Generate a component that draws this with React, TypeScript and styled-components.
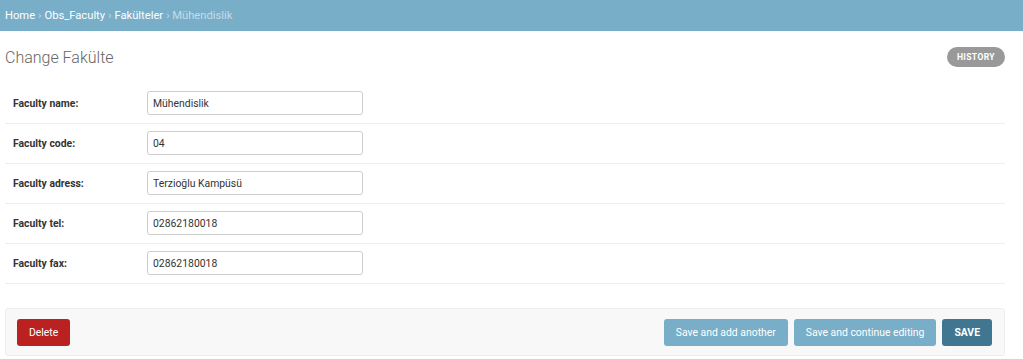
import React from 'react'
import styled, { createGlobalStyle } from 'styled-components'

const GlobalStyle = createGlobalStyle`
  html, body {
    margin: 0;
    padding: 0;
    background: #fff;
    font-family: Roboto, "Liberation Sans", sans-serif;
    color: #333;
  }
`

const Breadcrumbs = styled.div`
  height: 31px;
  background: #79aec8;
  color: #c4dce8;
  font-size: 11.2px;
  display: flex;
  align-items: center;
  padding: 0 5px;
  box-sizing: border-box;
  gap: 3px;
`

const Crumb = styled.a`
  color: #fff;
  text-decoration: none;
`

const Content = styled.div`
  padding: 14px 18px 0 5px;
`

const TitleRow = styled.div`
  display: flex;
  justify-content: space-between;
  align-items: center;
  margin-bottom: 13px;
`

const Title = styled.h1`
  margin: 0;
  font-size: 16px;
  font-weight: 300;
  color: #666;
  line-height: 26px;
`

const HistoryLink = styled.a`
  background: #999;
  color: #fff;
  font-size: 8.5px;
  font-weight: 700;
  letter-spacing: 0.4px;
  text-transform: uppercase;
  border-radius: 10px;
  height: 20px;
  padding: 0 10px;
  display: flex;
  align-items: center;
  margin-top: -2px;
`

const FormRow = styled.div`
  display: flex;
  align-items: center;
  height: 40px;
  border-bottom: 1px solid #eee;
  padding-left: 8px;
  box-sizing: border-box;
`

const Label = styled.label`
  width: 134px;
  font-size: 10.4px;
  font-weight: 700;
  color: #333;
`

const TextInput = styled.input`
  width: 216px;
  height: 24px;
  box-sizing: border-box;
  border: 1px solid #ccc;
  border-radius: 3px;
  padding: 0 5px;
  font-family: Roboto, "Liberation Sans", sans-serif;
  font-size: 10.4px;
  color: #333;
  margin-top: -1px;
`

const SubmitRow = styled.div`
  margin-top: 24px;
  display: flex;
  align-items: center;
  gap: 6px;
  padding: 10px 12px 9px 11px;
  background: #f8f8f8;
  border: 1px solid #eee;
  border-radius: 3px;
`

const Spacer = styled.div`
  flex: 1;
`

const Button = styled.button<{ $kind: 'delete' | 'secondary' | 'default' }>`
  height: 27px;
  border: none;
  border-radius: 3px;
  padding: 0 12px;
  font-family: Roboto, "Liberation Sans", sans-serif;
  font-size: 10.4px;
  color: #fff;
  background: ${p =>
    p.$kind === 'delete' ? '#ba2121' : p.$kind === 'default' ? '#417690' : '#79aec8'};
  font-weight: ${p => (p.$kind === 'default' ? 700 : 400)};
  text-transform: ${p => (p.$kind === 'default' ? 'uppercase' : 'none')};
`

const fields = [
  { label: 'Faculty name:', value: 'Mühendislik' },
  { label: 'Faculty code:', value: '04' },
  { label: 'Faculty adress:', value: 'Terzioğlu Kampüsü' },
  { label: 'Faculty tel:', value: '02862180018' },
  { label: 'Faculty fax:', value: '02862180018' },
]

export default function App() {
  return (
    <>
      <GlobalStyle />
      <Breadcrumbs>
        <Crumb>Home</Crumb> › <Crumb>Obs_Faculty</Crumb> › <Crumb>Fakülteler</Crumb> › Mühendislik
      </Breadcrumbs>
      <Content>
        <TitleRow>
          <Title>Change Fakülte</Title>
          <HistoryLink>History</HistoryLink>
        </TitleRow>
        {fields.map(f => (
          <FormRow key={f.label}>
            <Label>{f.label}</Label>
            <TextInput defaultValue={f.value} />
          </FormRow>
        ))}
        <SubmitRow>
          <Button $kind="delete">Delete</Button>
          <Spacer />
          <Button $kind="secondary">Save and add another</Button>
          <Button $kind="secondary">Save and continue editing</Button>
          <Button $kind="default">Save</Button>
        </SubmitRow>
      </Content>
    </>
  )
}
